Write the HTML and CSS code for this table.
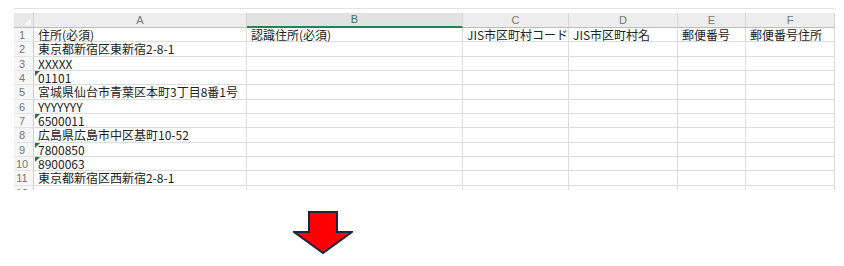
FILE: index.html
```html
<!DOCTYPE html>
<html lang="ja">
<head>
<meta charset="utf-8">
<title>住所データ</title>
<link rel="stylesheet" href="styles.css">
</head>
<body>
<div class="bar"></div>
<div class="sheet">
  <div class="corner"></div>
  <div class="ch">A</div><div class="ch sel">B</div><div class="ch">C</div><div class="ch">D</div><div class="ch">E</div><div class="ch">F</div>

  <div class="rh">1</div><div class="c">住所(必須)</div><div class="c">認識住所(必須)</div><div class="c">JIS市区町村コード</div><div class="c">JIS市区町村名</div><div class="c">郵便番号</div><div class="c">郵便番号住所</div>
  <div class="rh">2</div><div class="c">東京都新宿区東新宿2-8-1</div><div class="c"></div><div class="c"></div><div class="c"></div><div class="c"></div><div class="c"></div>
  <div class="rh">3</div><div class="c">XXXXX</div><div class="c"></div><div class="c"></div><div class="c"></div><div class="c"></div><div class="c"></div>
  <div class="rh">4</div><div class="c txt">01101</div><div class="c"></div><div class="c"></div><div class="c"></div><div class="c"></div><div class="c"></div>
  <div class="rh">5</div><div class="c">宮城県仙台市青葉区本町3丁目8番1号</div><div class="c"></div><div class="c"></div><div class="c"></div><div class="c"></div><div class="c"></div>
  <div class="rh">6</div><div class="c">YYYYYYY</div><div class="c"></div><div class="c"></div><div class="c"></div><div class="c"></div><div class="c"></div>
  <div class="rh">7</div><div class="c txt">6500011</div><div class="c"></div><div class="c"></div><div class="c"></div><div class="c"></div><div class="c"></div>
  <div class="rh">8</div><div class="c">広島県広島市中区基町10-52</div><div class="c"></div><div class="c"></div><div class="c"></div><div class="c"></div><div class="c"></div>
  <div class="rh">9</div><div class="c txt">7800850</div><div class="c"></div><div class="c"></div><div class="c"></div><div class="c"></div><div class="c"></div>
  <div class="rh">10</div><div class="c txt">8900063</div><div class="c"></div><div class="c"></div><div class="c"></div><div class="c"></div><div class="c"></div>
  <div class="rh">11</div><div class="c">東京都新宿区西新宿2-8-1</div><div class="c"></div><div class="c"></div><div class="c"></div><div class="c"></div><div class="c"></div>
  <div class="rh">12</div><div class="c"></div><div class="c"></div><div class="c"></div><div class="c"></div><div class="c"></div><div class="c"></div>
</div>

<div class="arrow">
  <svg width="60" height="44" viewBox="0 0 60 44">
    <polygon points="16,1 44,1 44,21 59,21 30,42 1,21 16,21" fill="#ff0000" stroke="#1c2541" stroke-width="2" stroke-linejoin="miter"/>
  </svg>
</div>
</body>
</html>
```

FILE: styles.css
```css
body {margin: 0; background: #fff; font-family: "Noto Sans CJK JP", "Liberation Sans", sans-serif;}
.bar {height: 8px; border-bottom: 1px solid #e2e2e2; margin: 0 9px 4px 14px;}
.sheet {display: grid; grid-template-columns: 20px 213px 216px 106px 109px 68px 89px; grid-template-rows: 15px; grid-auto-rows: 14.33px; width: 821px; height: 177px; overflow: hidden; margin-left: 14px;}
.corner {background: #e9e9e9; border-right: 1px solid #cfcfcf; border-bottom: 1px solid #bdbdbd; position: relative;}
.corner::after {content: ""; position: absolute; right: 2px; bottom: 2px; border-left: 7px solid transparent; border-bottom: 7px solid #f7f7f7;}
.ch {background: #ededed; color: #767676; font-family: "Liberation Sans", sans-serif; font-size: 11px; line-height: 14px; text-align: center; border-right: 1px solid #d6d6d6; border-bottom: 1px solid #bdbdbd;}
.ch.sel {background: #e2e2e2; color: #3d7256; border-bottom: 2px solid #2e7d55; line-height: 13px;}
.rh {background: #f6f6f6; color: #767676; font-family: "Liberation Sans", sans-serif; font-size: 11px; line-height: 14px; text-align: center; padding-right: 3px; border-right: 1px solid #cfcfcf; border-bottom: 1px solid #e3e3e3; box-sizing: border-box;}
.c {position: relative; box-sizing: border-box; padding-left: 4px; color: #222; font-size: 12px; line-height: 14px; white-space: nowrap; border-right: 1px solid #dcdcdc; border-bottom: 1px solid #dcdcdc;}
.txt::before {content: ""; position: absolute; left: 1px; top: 0; border-top: 5px solid #1e7145; border-right: 5px solid transparent;}
.arrow {margin: 21px 0 0 293px; height: 44px;}
.arrow svg {display: block;}
```
